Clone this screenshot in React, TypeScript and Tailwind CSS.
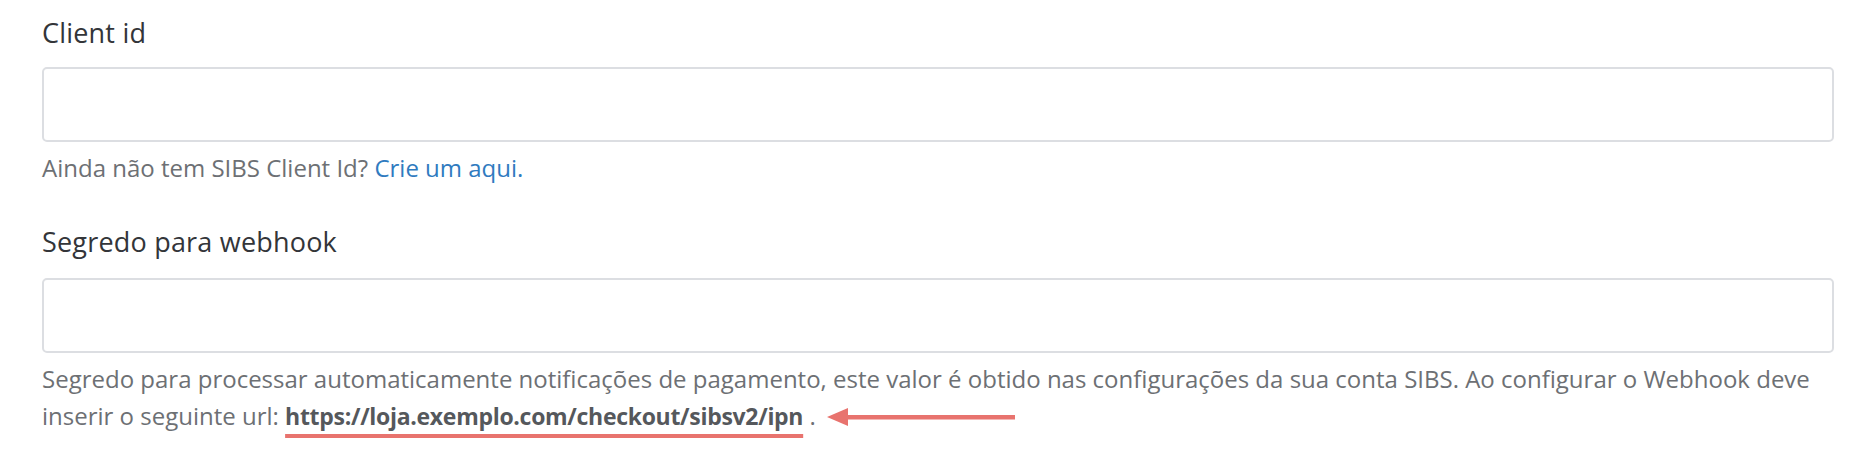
import React from "react";

const fieldInput =
  "block w-full h-[75px] rounded-[5px] border-2 border-[#dcdee2] bg-white px-4 outline-none";

const Field = ({
  label,
  help,
  labelClass,
}: {
  label: string;
  help: React.ReactNode;
  labelClass: string;
}) => (
  <div className="flex flex-col">
    <label
      className={`text-[27px] leading-[36px] tracking-[0.2px] text-[#333539] ${labelClass}`}
    >
      {label}
    </label>
    <input type="text" className={fieldInput} />
    <p className="mt-[7px] text-[24px] leading-[37px] text-[#6d7074]">{help}</p>
  </div>
);

const Arrow = () => (
  <svg
    width="188"
    height="20"
    viewBox="0 0 188 20"
    className="inline-block align-middle ml-[11px] -mt-[4px]"
  >
    <polygon points="0,10 21,1 21,19" fill="#e8736e" />
    <rect x="18" y="8" width="170" height="4.5" fill="#e8736e" />
  </svg>
);

export default function App() {
  return (
    <div
      className="min-h-screen bg-white px-[42px] pt-[15px]"
      style={{ fontFamily: "'Open Sans', 'Liberation Sans', sans-serif" }}
    >
      <Field
        label="Client id"
        labelClass="mb-[16px]"
        help={
          <>
            Ainda não tem SIBS Client Id?{" "}
            <a href="#" className="text-[#2f7bbf]">
              Crie um aqui.
            </a>
          </>
        }
      />
      <div className="mt-[38px]">
        <Field
          label="Segredo para webhook"
          labelClass="mb-[18px]"
          help={
            <>
              Segredo para processar automaticamente notificações de pagamento, este
              valor é obtido nas configurações da sua conta SIBS. Ao configurar o
              Webhook deve inserir o seguinte url:{" "}
              <strong className="text-[23px] font-bold tracking-[-0.3px] text-[#55585c] underline decoration-[#e8736e] decoration-[4px] underline-offset-[9px]">
                https://loja.exemplo.com/checkout/sibsv2/ipn
              </strong>{" "}
              .
              <Arrow />
            </>
          }
        />
      </div>
    </div>
  );
}
